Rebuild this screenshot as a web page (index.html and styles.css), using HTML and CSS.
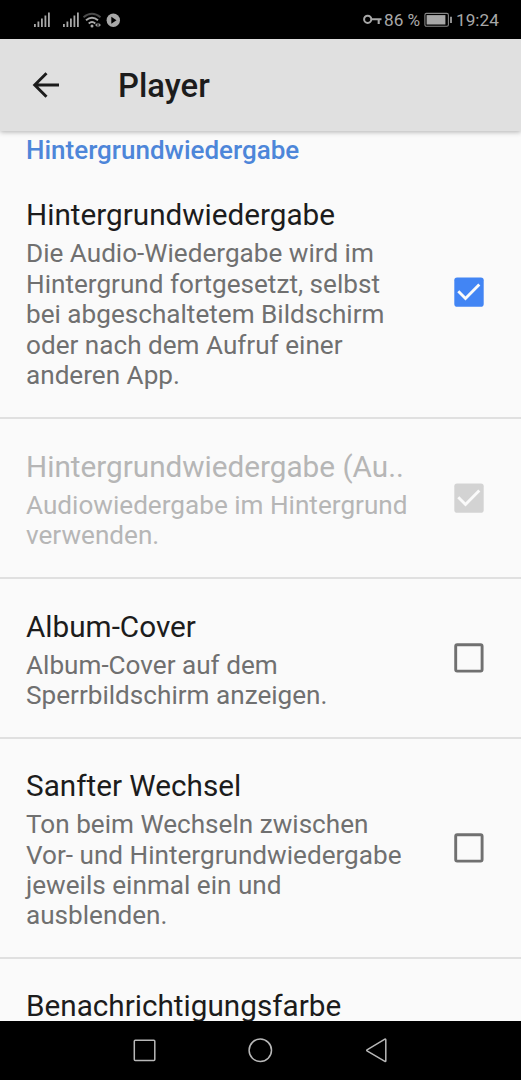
FILE: index.html
```html
<!DOCTYPE html>
<html lang="de">
<head>
<meta charset="utf-8">
<title>Player</title>
<link rel="stylesheet" href="styles.css">
</head>
<body>
<div class="screen">
  <div class="status">
    <svg class="status-left" width="90" height="24" viewBox="0 0 90 24">
      <g stroke="#a8a8a8" stroke-width="1.8">
        <path d="M1.9 19v-3M5.4 19v-5.5M8.900 19v-8.500M12.400 19V7.500M15.900 19V4.500"/>
        <path d="M30.900 19v-3M34.400 19v-5.500M37.900 19v-8.500M41.400 19V7.500M44.900 19V4.500"/>
      </g>
      <g fill="none" stroke-width="1.9">
        <path d="M50.500 9.200q8.500-7 17 0" stroke="#4a4a4a"/>
        <path d="M53 12.200q6-5 12 0M55.700 15.400q3.300-2.600 6.600 0" stroke="#aaa"/>
      </g>
      <circle cx="59" cy="18" r="1.500" fill="#aaa"/>
      <path d="M62 17l2.500-2.200v4.400zM68 17l-2.500-2.200v4.400z" fill="#999"/>
      <circle cx="80.300" cy="12.200" r="6.700" fill="#a8a8a8"/>
      <path d="M78.300 8.700l5.200 3.500-5.200 3.500z" fill="#000"/>
    </svg>
    <div class="status-right">
      <svg width="19" height="12" viewBox="0 0 19 12">
        <circle cx="4.700" cy="5.300" r="3.600" fill="none" stroke="#a8a8a8" stroke-width="2"/>
        <path d="M8 5.300h10.500M15.700 5v5" fill="none" stroke="#a8a8a8" stroke-width="2.100"/>
      </svg>
      <span class="percent">86 %</span>
      <svg class="battery" width="29" height="16" viewBox="0 0 29 16">
        <rect x=".9" y="1.400" width="23.500" height="12.800" rx="1.500" fill="none" stroke="#858585" stroke-width="1.100"/>
        <rect x="2.600" y="3.100" width="18.800" height="9.400" fill="#a8a8a8"/>
        <path d="M27 4.700v6.200" stroke="#a8a8a8" stroke-width="1.700"/>
      </svg>
      <span class="clock">19:24</span>
    </div>
  </div>

  <header class="toolbar">
    <svg class="back" width="28" height="28" viewBox="0 0 28 28">
      <path d="M27 14H3M14.500 2.200L2.700 14l11.800 11.800" fill="none" stroke="#1c1c1c" stroke-width="2.900"/>
    </svg>
    <h1 class="toolbar-title">Player</h1>
  </header>

  <main class="list">
    <h2 class="category">Hintergrundwiedergabe</h2>

    <section class="row row-5">
      <div class="text">
        <div class="title">Hintergrundwiedergabe</div>
        <div class="summary">Die Audio-Wiedergabe wird im<br>Hintergrund fortgesetzt, selbst<br>bei abgeschaltetem Bildschirm<br>oder nach dem Aufruf einer<br>anderen App.</div>
      </div>
      <svg class="check" viewBox="0 0 30 30">
        <rect x=".3" y=".5" width="29.400" height="29.200" rx="2.800" fill="#4285f4"/>
        <path d="M4.300 14.300l7.200 7.200L25.300 7.600" fill="none" stroke="#fafafa" stroke-width="2.900"/>
      </svg>
    </section>

    <section class="row row-2 disabled">
      <div class="text">
        <div class="title">Hintergrundwiedergabe (Au..</div>
        <div class="summary">Audiowiedergabe im Hintergrund<br>verwenden.</div>
      </div>
      <svg class="check" viewBox="0 0 30 30">
        <rect x=".3" y=".5" width="29.400" height="29.200" rx="2.800" fill="#d3d3d3"/>
        <path d="M4.300 14.300l7.200 7.200L25.300 7.600" fill="none" stroke="#fafafa" stroke-width="2.900"/>
      </svg>
    </section>

    <section class="row row-2">
      <div class="text">
        <div class="title">Album-Cover</div>
        <div class="summary">Album-Cover auf dem<br>Sperrbildschirm anzeigen.</div>
      </div>
      <svg class="check" viewBox="0 0 30 30">
        <rect x="1.700" y="1.700" width="26.400" height="26.400" rx="1.500" fill="none" stroke="#707070" stroke-width="2.900"/>
      </svg>
    </section>

    <section class="row row-4">
      <div class="text">
        <div class="title">Sanfter Wechsel</div>
        <div class="summary">Ton beim Wechseln zwischen<br>Vor- und Hintergrundwiedergabe<br>jeweils einmal ein und<br>ausblenden.</div>
      </div>
      <svg class="check" viewBox="0 0 30 30">
        <rect x="1.700" y="1.700" width="26.400" height="26.400" rx="1.500" fill="none" stroke="#707070" stroke-width="2.900"/>
      </svg>
    </section>

    <section class="row row-last">
      <div class="text">
        <div class="title">Benachrichtigungsfarbe</div>
      </div>
    </section>
  </main>

  <nav class="navbar">
    <svg width="24" height="26" viewBox="0 0 24 26"><rect x="2.300" y="3.200" width="20.500" height="20.300" rx="1" fill="none" stroke="#b8b8b8" stroke-width="1.500"/></svg>
    <svg width="26" height="26" viewBox="0 0 26 26"><circle cx="13.300" cy="13.300" r="11.200" fill="none" stroke="#b8b8b8" stroke-width="1.500"/></svg>
    <svg width="24" height="26" viewBox="0 0 24 26"><path d="M21.800 2.700v21.200a.6.600 0 0 1-.9.500L3 13.800a.6.600 0 0 1 0-1L20.900 2.200a.6.600 0 0 1 .9.500z" fill="none" stroke="#b8b8b8" stroke-width="1.500"/></svg>
  </nav>
</div>
</body>
</html>
```
FILE: styles.css
```css
* { box-sizing: border-box; }
body {
  margin: 0;
  font-family: Roboto, "Noto Sans", sans-serif;
  background: #fafafa;
}
.screen {
  width: 521px;
  height: 1080px;
  display: flex;
  flex-direction: column;
  overflow: hidden;
}
svg { display: block; flex: none; }

.status {
  flex: none;
  height: 39px;
  display: flex;
  justify-content: space-between;
  align-items: flex-start;
  padding: 8px 22px 0 33px;
  background: #000;
  color: #a8a8a8;
  font-size: 17.2px;
  line-height: 24px;
}
.status-right { display: flex; align-items: center; }
.percent { margin-left: 2px; width: 37px; white-space: nowrap; }
.battery { margin-left: 3px; }
.clock { margin-left: 3px; width: 43px; white-space: nowrap; }

.toolbar {
  flex: none;
  height: 92px;
  display: flex;
  align-items: center;
  padding-left: 32px;
  background: #e0e0e0;
  box-shadow: 0 1px 5px rgba(0, 0, 0, .3);
  z-index: 1;
}
.toolbar-title {
  margin: 2px 0 0 58px;
  font-size: 32.8px;
  font-weight: 500;
  line-height: 40px;
  color: #1c1c1c;
}

.list { flex: 1; min-height: 0; overflow: hidden; }
.category {
  margin: 0;
  height: 37px;
  padding: 4px 0 0 26px;
  font-size: 26px;
  font-weight: 500;
  line-height: 30px;
  color: #4d86d9;
}
.row {
  display: flex;
  justify-content: space-between;
  align-items: center;
  padding: 0 37px 0 26px;
  border-bottom: 2px solid #e0e0e0;
}
.row-5 { height: 251px; }
.row-5 .check { margin-bottom: 2px; }
.row-2 { height: 160px; }
.row-4 { height: 220px; }
.row-last { height: 160px; align-items: flex-start; padding-top: 26px; }
.text { margin-top: 4px; }
.title {
  font-size: 29.7px;
  line-height: 34px;
  color: #1c1c1c;
  white-space: nowrap;
}
.summary {
  margin-top: 6px;
  font-size: 26.13px;
  line-height: 30.4px;
  color: #707070;
  white-space: nowrap;
}
.disabled .title, .disabled .summary { color: #b6b6b6; }
.check { width: 30px; height: 30px; }

.navbar {
  flex: none;
  height: 59px;
  display: flex;
  justify-content: space-between;
  padding: 16px 133px 0 132px;
  background: #000;
}
```
